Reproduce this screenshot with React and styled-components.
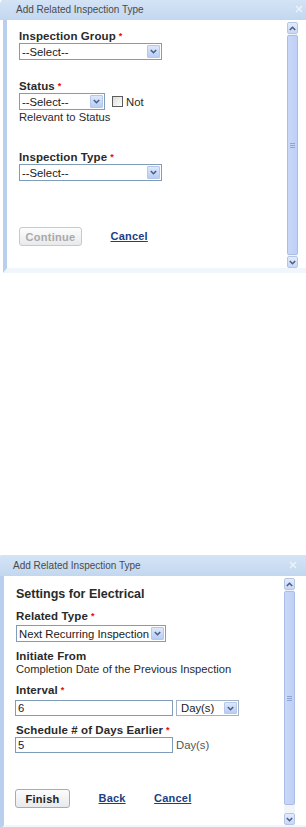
import React from "react";
import styled, { createGlobalStyle } from "styled-components";

const Global = createGlobalStyle`
  html, body { margin: 0; padding: 0; background: #fff; }
  body { font-family: "Liberation Sans", Arial, sans-serif; font-size: 11px; color: #222; }
`;

const Page = styled.div`
  width: 306px;
  height: 827px;
  overflow: hidden;
  display: flex;
  flex-direction: column;
`;

const Dialog = styled.section`
  flex: none;
  width: ${(p) => 306 + p.$shift}px;
  margin-left: ${(p) => -p.$shift}px;
  margin-top: ${(p) => p.$top}px;
  display: flex;
  flex-direction: column;
`;

const TitleBar = styled.header`
  height: 21px;
  box-sizing: border-box;
  padding: 0 0 1px 16px;
  display: flex;
  align-items: center;
  border-top-left-radius: 5px;
  background: linear-gradient(#d5e4f6, #c2d7ef);
  color: #4a4a4a;
  font-size: 10px;
`;

const Close = styled.svg`
  margin-left: auto;
  margin-right: ${(p) => p.$right}px;
  width: 8px;
  height: 8px;
`;

const Body = styled.div`
  display: flex;
  height: ${(p) => p.$h}px;
  margin-left: 3px;
  border-left: 4px solid #b8d0ee;
  border-bottom: 5px solid #f1f6fc;
  background: #fff;
`;

const Content = styled.div`
  flex: none;
  width: 280px;
  box-sizing: border-box;
  padding: ${(p) => p.$top}px 0 0 12px;
  display: flex;
  flex-direction: column;
  align-items: flex-start;
`;

const Scroll = styled.div`
  flex: none;
  width: 11px;
  margin-top: 2px;
  display: flex;
  flex-direction: column;
`;

const ScrollBtn = styled.div`
  height: 12px;
  box-sizing: border-box;
  border: 1px solid #b3c5e8;
  border-radius: 2px;
  background: linear-gradient(#e4ecfb, #c8d7f4);
  display: flex;
  align-items: center;
  justify-content: center;
`;

const Track = styled.div`
  flex: 1;
  padding: 1px 0;
  background: #f1f4f9;
`;

const Thumb = styled.div`
  height: ${(p) => p.$h}px;
  box-sizing: border-box;
  border: 1px solid #a9bde6;
  border-radius: 2px;
  background: linear-gradient(90deg, #c9d8f8, #bfd0f6);
  display: flex;
  flex-direction: column;
  align-items: center;
  justify-content: center;
  gap: 1px;
`;

const Grip = styled.span`
  width: 5px;
  height: 1px;
  background: #8ea5d6;
`;

const Label = styled.div`
  font-weight: bold;
  font-size: 11.5px;
  letter-spacing: 0.1px;
  line-height: 13px;
  color: #2a2a2a;
  margin-top: ${(p) => p.$mt || 0}px;
  white-space: nowrap;
`;

const Heading = styled.h2`
  margin: 0;
  font-size: 12.5px;
  font-weight: bold;
  line-height: 15px;
  color: #2a2a2a;
`;

const Req = styled.span`
  color: #e01010;
  font-size: 9px;
  margin-left: 3px;
  vertical-align: 1px;
`;

const Text = styled.div`
  font-size: 11.2px;
  line-height: 13px;
  color: ${(p) => p.$color || "#2a2a2a"};
  margin-top: ${(p) => p.$mt || 0}px;
  white-space: nowrap;
`;

const Row = styled.div`
  display: flex;
  align-items: center;
  margin-top: ${(p) => p.$mt || 0}px;
`;

const Select = styled.div`
  width: ${(p) => p.$w}px;
  height: ${(p) => p.$h || 17}px;
  box-sizing: border-box;
  border: 1px solid ${(p) => p.$border || "#7f9db9"};
  background: #fff;
  padding: 1px;
  display: flex;
  align-items: stretch;
  margin-top: ${(p) => p.$mt || 0}px;
  margin-left: ${(p) => p.$ml || 0}px;
  font-size: 11.3px;
  color: #1a1a1a;
`;

const SelectText = styled.span`
  flex: 1;
  padding-left: ${(p) => p.$pl ?? 1}px;
  display: flex;
  align-items: center;
  white-space: nowrap;
  overflow: hidden;
`;

const SelectArrow = styled.span`
  flex: none;
  width: 13px;
  box-sizing: border-box;
  border: 1px solid #b6c7ea;
  border-radius: 1px;
  background: linear-gradient(#dde8fb, #b9cdf3);
  display: flex;
  align-items: center;
  justify-content: center;
`;

const Input = styled.div`
  width: 158px;
  height: 16px;
  box-sizing: border-box;
  margin-left: -1px;
  border: 1px solid #7f9db9;
  padding-left: 2px;
  display: flex;
  align-items: center;
  font-size: 11.3px;
  color: #1a1a1a;
`;

const Unit = styled.span`
  margin-left: 3px;
  font-size: 11.3px;
  color: #555;
`;

const Check = styled.span`
  width: 11px;
  height: 11px;
  box-sizing: border-box;
  margin-left: 7px;
  border: 1px solid #5c5c5c;
  background: linear-gradient(135deg, #dcdcdc, #fff);
`;

const CheckText = styled.span`
  margin-left: 3px;
  font-size: 11.3px;
  color: #2a2a2a;
`;

const Actions = styled.div`
  display: flex;
  align-items: center;
  gap: 28.5px;
  margin-top: ${(p) => p.$mt}px;
  margin-left: ${(p) => p.$ml || 0}px;
`;

const Button = styled.button`
  width: ${(p) => p.$w}px;
  height: 19px;
  box-sizing: border-box;
  padding: 0;
  border: 1px solid ${(p) => (p.disabled ? "#c6c9ce" : "#a6acb5")};
  border-radius: 3px;
  background: linear-gradient(#fdfdfd, #e7e9ec);
  font-family: "Liberation Sans", Arial, sans-serif;
  font-size: 11px;
  font-weight: bold;
  letter-spacing: 0.3px;
  color: ${(p) => (p.disabled ? "#a9a9a9" : "#222")};
`;

const Link = styled.a`
  font-size: 11px;
  font-weight: bold;
  letter-spacing: 0.2px;
  line-height: 13px;
  color: #1b3f82;
  text-decoration: underline;
`;

const Chevron = ({ up, color = "#4b5e85" }) => (
  <svg width="7" height="5" viewBox="0 0 7 5">
    <polyline
      points={up ? "0.8,4 3.5,1.3 6.2,4" : "0.8,1 3.5,3.7 6.2,1"}
      fill="none"
      stroke={color}
      strokeWidth="1.6"
    />
  </svg>
);

const Arrow = () => (
  <SelectArrow>
    <Chevron />
  </SelectArrow>
);

const Scrollbar = ({ thumb }) => (
  <Scroll>
    <ScrollBtn>
      <Chevron up />
    </ScrollBtn>
    <Track>
      <Thumb $h={thumb}>
        <Grip />
        <Grip />
        <Grip />
      </Thumb>
    </Track>
    <ScrollBtn>
      <Chevron />
    </ScrollBtn>
  </Scroll>
);

const Window = ({ shift, top, closeRight, bodyH, thumb, contentTop, children }) => (
  <Dialog $shift={shift} $top={top}>
    <TitleBar>
      <span>Add Related Inspection Type</span>
      <Close $right={closeRight} viewBox="0 0 8 8">
        <path d="M1 1L7 7M7 1L1 7" stroke="#eef3f9" strokeWidth="1.4" />
      </Close>
    </TitleBar>
    <Body $h={bodyH}>
      <Content $top={contentTop}>{children}</Content>
      <Scrollbar thumb={thumb} />
    </Body>
  </Dialog>
);

export default function App() {
  return (
    <>
      <Global />
      <Page>
        <Window shift={0} top={-1} closeRight={3} bodyH={248} thumb={220} contentTop={10}>
          <Label>
            Inspection Group<Req>*</Req>
          </Label>
          <Select $w={143}>
            <SelectText>--Select--</SelectText>
            <Arrow />
          </Select>
          <Label $mt={20}>
            Status<Req>*</Req>
          </Label>
          <Row>
            <Select $w={86}>
              <SelectText>--Select--</SelectText>
              <Arrow />
            </Select>
            <Check />
            <CheckText>Not</CheckText>
          </Row>
          <Text $mt={1}>Relevant to Status</Text>
          <Label $mt={27}>
            Inspection Type<Req>*</Req>
          </Label>
          <Select $w={143}>
            <SelectText>--Select--</SelectText>
            <Arrow />
          </Select>
          <Actions $mt={46}>
            <Button $w={63} disabled>
              Continue
            </Button>
            <Link href="#">Cancel</Link>
          </Actions>
        </Window>

        <Window shift={3} top={282} closeRight={9} bodyH={249} thumb={214} contentTop={11}>
          <Heading>Settings for Electrical</Heading>
          <Label $mt={8}>
            Related Type<Req>*</Req>
          </Label>
          <Select $w={150} $mt={2}>
            <SelectText $pl={1}>Next Recurring Inspection</SelectText>
            <Arrow />
          </Select>
          <Label $mt={8}>Initiate From</Label>
          <Text>Completion Date of the Previous Inspection</Text>
          <Label $mt={8}>
            Interval<Req>*</Req>
          </Label>
          <Row $mt={3}>
            <Input>6</Input>
            <Select $w={63} $h={16} $ml={3} $border="#a3b3c7">
              <SelectText $pl={3}>Day(s)</SelectText>
              <Arrow />
            </Select>
          </Row>
          <Label $mt={8}>
            Schedule # of Days Earlier<Req>*</Req>
          </Label>
          <Row>
            <Input>5</Input>
            <Unit>Day(s)</Unit>
          </Row>
          <Actions $mt={36} $ml={-1}>
            <Button $w={55}>Finish</Button>
            <Link href="#">Back</Link>
            <Link href="#">Cancel</Link>
          </Actions>
        </Window>
      </Page>
    </>
  );
}
